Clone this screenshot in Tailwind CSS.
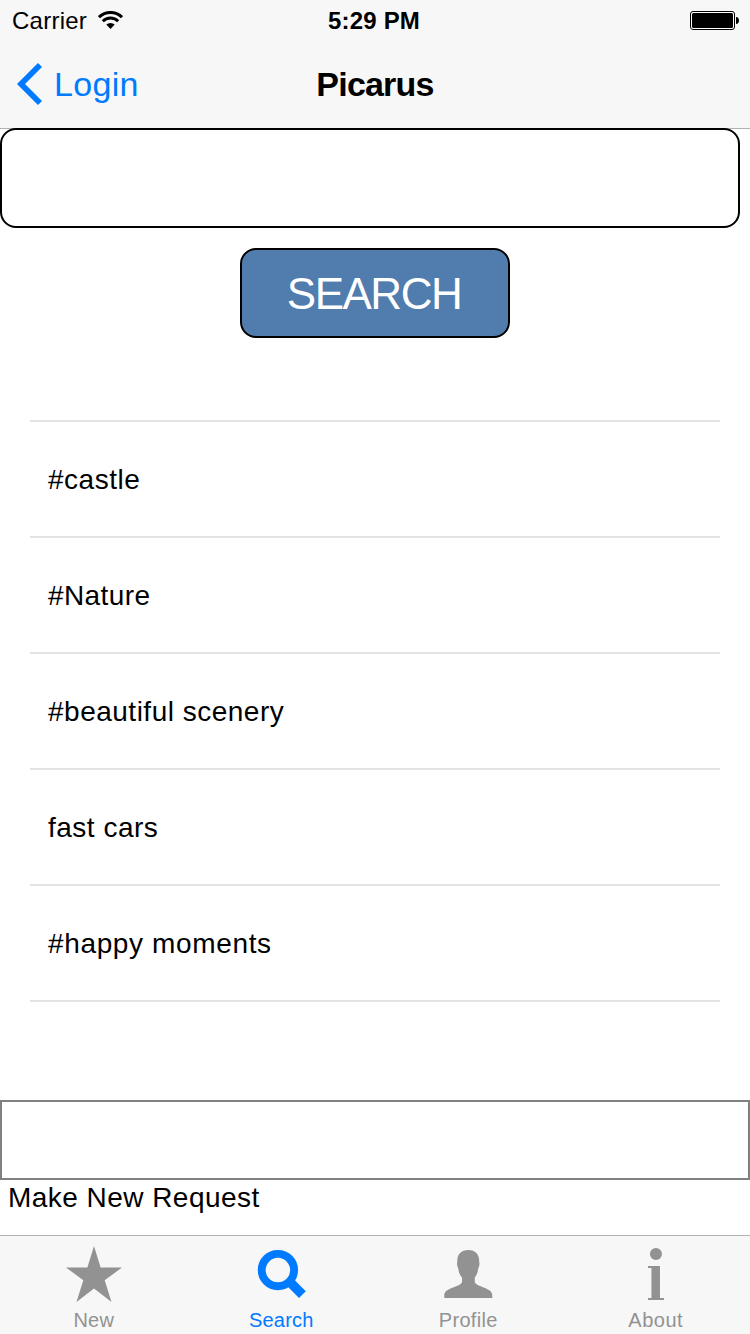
<!DOCTYPE html>
<html lang="en">
<head>
<meta charset="utf-8">
<title>Picarus</title>
<script src="https://cdn.jsdelivr.net/npm/@tailwindcss/browser@4"></script>
</head>
<body class="bg-white text-black font-['Liberation_Sans',Arial,sans-serif]">
<div class="w-[750px] h-[1334px] flex flex-col overflow-hidden">
  <header class="h-32 shrink-0 bg-[#f7f7f7]">
    <div class="h-10 grid grid-cols-3 items-center pl-3 pr-[11px]">
      <div class="flex items-center gap-[11px]">
        <span class="text-2xl leading-[38px] pt-0.5 tracking-[0.25px]">Carrier</span>
        <svg class="w-[25px] h-[18px]" viewBox="0 0 25 18" fill="none" stroke="#000">
          <path d="M1 6.2A16.3 16.3 0 0 1 24 6.2" stroke-width="3"/>
          <path d="M4.8 10.2A10.9 10.9 0 0 1 20.2 10.2" stroke-width="2.8"/>
          <path d="M8.3 13.6a6 6 0 0 1 8.4 0L12.5 18z" fill="#000" stroke="none"/>
        </svg>
      </div>
      <span class="text-center text-2xl leading-[38px] pt-0.5 font-bold tracking-[0.2px] -ml-[3px]">5:29 PM</span>
      <svg class="justify-self-end mt-px w-[49px] h-[19px]" viewBox="0 0 49 19">
        <rect x=".5" y=".5" width="44" height="18" rx="2.5" fill="#fff" stroke="#000"/>
        <rect x="2" y="2" width="41" height="15" rx="1.5"/>
        <path d="M46 6c4 0 4 7 0 7z"/>
      </svg>
    </div>
    <div class="h-[88px] grid grid-cols-3 items-center px-4">
      <div class="flex items-center gap-3 text-[#007aff]">
        <svg class="w-[26px] h-[42px]" viewBox="0 0 26 42" fill="none" stroke="currentColor" stroke-width="5.7"><path d="M24 2 5 21l19 19"/></svg>
        <span class="text-[34px] leading-[42px] tracking-[0.3px]">Login</span>
      </div>
      <h1 class="text-center text-[34px] leading-[42px] font-bold tracking-[-0.8px]">Picarus</h1>
    </div>
  </header>

  <main class="flex-1 flex flex-col shadow-[inset_0_1px_0_#b2b2b2]">
    <input aria-label="Search text" class="w-[740px] h-[100px] shrink-0 rounded-2xl border-2 border-black bg-white px-4 text-[28px] outline-none">
    <button class="mt-5 mx-auto w-[270px] h-[90px] shrink-0 rounded-2xl border-2 border-black bg-[#507cae] text-white text-[44px] leading-[84px] pt-0.5 pr-0.5 tracking-[-1.5px]">SEARCH</button>
    <ul class="mt-[82px] mx-[30px] border-t-2 border-[#e3e3e3] text-[28px] leading-[116px] tracking-[0.5px]">
      <li class="h-[116px] border-b-2 border-[#e3e3e3] pl-[18px]">#castle</li>
      <li class="h-[116px] border-b-2 border-[#e3e3e3] pl-[18px] tracking-[0.4px]">#Nature</li>
      <li class="h-[116px] border-b-2 border-[#e3e3e3] pl-[18px]">#beautiful scenery</li>
      <li class="h-[116px] border-b-2 border-[#e3e3e3] pl-[18px]">fast cars</li>
      <li class="h-[116px] border-b-2 border-[#e3e3e3] pl-[18px] tracking-[0.64px]">#happy moments</li>
    </ul>
    <input aria-label="New request" class="mt-[98px] w-full h-20 shrink-0 border-2 border-[#808080] bg-white px-4 text-[28px] outline-none">
    <p class="pl-2 text-[28px] leading-9 tracking-[0.46px]">Make New Request</p>
  </main>

  <nav class="h-[99px] shrink-0 border-t border-[#b2b2b2] bg-[#f7f7f7] grid grid-cols-4 text-[#929292] text-xl leading-6 tracking-[0.2px]">
    <div class="flex flex-col items-center pt-2.5">
      <svg class="w-14 h-[62px]" viewBox="0 0 56 62" fill="currentColor"><path d="M28 0l6.6 21.500H56L38.700 34.300 45.500 56 28 42.500 10.500 56l6.800-21.700L0 21.500h21.400z"/></svg>
      <span>New</span>
    </div>
    <div class="flex flex-col items-center pt-2.5 text-[#007aff]">
      <svg class="w-14 h-[62px]" viewBox="0 0 56 62"><circle cx="24.9" cy="24.1" r="16.2" fill="none" stroke="currentColor" stroke-width="7.9"/><path d="M35 34.200 49.400 48.600" fill="none" stroke="currentColor" stroke-width="9.6"/></svg>
      <span>Search</span>
    </div>
    <div class="flex flex-col items-center pt-2.5">
      <svg class="w-14 h-[62px]" viewBox="0.75 0 56 62" fill="currentColor"><path d="M28 4C20.500 4 16.600 9 17.100 16c-.8 1-.2 4.500.8 6 .5 4 1.500 7 3.900 9.500v4.500c-1 2.500-5 4-9 5.500C7 43.800 4 45.500 4 49.500V52h48v-2.500c0-4-3-5.700-8.500-8-4-1.500-8-3-9-5.500v-4.500c2.100-2.500 3.100-5.500 3.600-9.500 1-1.500 1.600-5 .8-6C39.400 9 35.500 4 28 4z"/></svg>
      <span class="pr-px tracking-[0.3px]">Profile</span>
    </div>
    <div class="flex flex-col items-center pt-2.5">
      <svg class="w-14 h-[62px]" viewBox="0.25 0 56 62" fill="currentColor"><circle cx="28.2" cy="8" r="6"/><path d="M20.200 20h12v32h4v2h-16v-2h3.500V22h-3.500z"/></svg>
      <span class="pr-px tracking-[0.5px]">About</span>
    </div>
  </nav>
</div>
</body>
</html>
